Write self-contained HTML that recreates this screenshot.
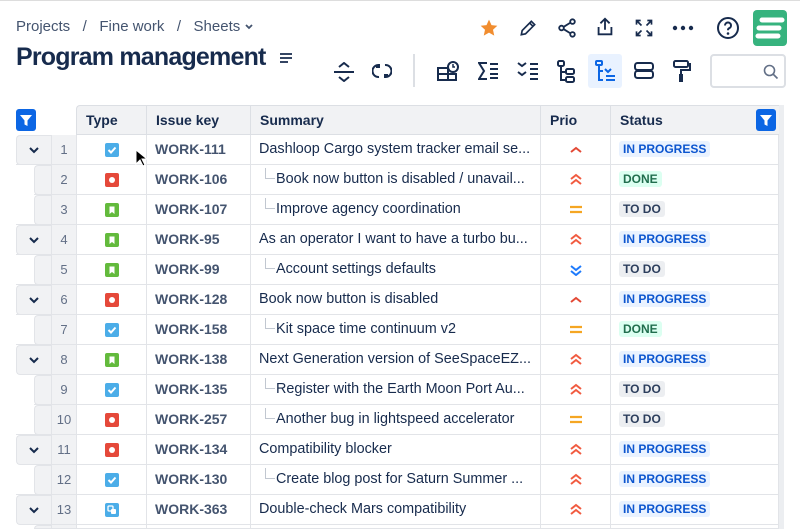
<!DOCTYPE html><html style="overflow:hidden;height:529px"><head><meta charset="utf-8"><style>
*{box-sizing:border-box;margin:0;padding:0}
body{width:800px;height:529px;overflow:hidden;background:#fff;font-family:"Liberation Sans",sans-serif;color:#172b4d;position:relative}
.a{position:absolute}
.bc{left:16px;top:18px;font-size:15px;color:#44546f}
h1{position:absolute;left:16px;top:43px;font-size:25px;font-weight:700;letter-spacing:-0.8px;color:#172b4d}
.ic{position:absolute}
.hdr{top:105px;height:30px;background:#f1f2f4;border-top:1px solid #dcdfe4;border-bottom:1px solid #dcdfe4;font-weight:700;font-size:14px}
.hc{position:absolute;top:0;height:28px;line-height:28px;padding-left:9px;border-left:1px solid #dcdfe4}
.row{position:absolute;left:0;width:783px;height:30px;font-size:14px}
.row::after{content:"";position:absolute;left:var(--l,34px);right:0;bottom:0;height:1px;background:#e2e4e8}
.par{--l:16px}
.g{position:absolute;top:0;height:30px;background:#f1f2f4;border-radius:4px 0 0 4px;border:1px solid #e2e4e8;border-right:none}
.n{position:absolute;left:51px;width:25px;top:0;height:30px;background:#f1f2f4;color:#626f86;text-align:center;line-height:29px;font-size:13px;border-left:1px solid #e2e4e8}
.c{position:absolute;top:0;height:30px;line-height:29px;border-left:1px solid #e2e4e8}
.ty{left:76px;width:70px}
.k{left:146px;width:104px;padding-left:8px;color:#44546f;font-weight:700}
.s{left:250px;width:290px;padding-left:8px;white-space:nowrap;overflow:hidden;font-size:14.4px}
.p{left:540px;width:70px}
.p svg{display:block}
.st{left:610px;width:169px;border-right:1px solid #e2e4e8}
.tk{display:inline-block;width:10px;height:11px;border-left:1px solid #c1c7d0;border-bottom:1px solid #c1c7d0;margin-left:6px;margin-right:1px;vertical-align:4px}
.lz{display:inline-block;font-size:12px;font-weight:700;line-height:16px;padding:0 4px;border-radius:3px;margin-left:8px;vertical-align:1px}
.ip{background:#e9f2ff;color:#0c55cf}.dn{background:#dcfff1;color:#216e4e}.td{background:#eceef1;color:#2c3e5d}
.t{position:absolute;left:28px;top:8px;width:14px;height:14px;border-radius:2px;line-height:0}
.t svg{display:block}
.chev{position:absolute;left:12px;top:10px;display:block}
</style></head><body>
<div style="position:absolute;left:0;top:0;width:800px;height:1px;background:#ddd"></div>
<div class="a bc">Projects &nbsp; / &nbsp; Fine work &nbsp; / &nbsp; Sheets <svg width="10" height="8" viewBox="0 0 10 8"><path d="M2 2l3 3 3-3" stroke="#44546f" stroke-width="1.8" fill="none"/></svg></div>
<h1>Program management</h1>
<svg class="ic" style="left:279px;top:52px" width="14" height="12"><path d="M1 2h12M1 6h12M1 10h8" stroke="#172b4d" stroke-width="1.8"/></svg>
<svg class="ic" style="left:479px;top:18px" width="20" height="20" viewBox="0 0 24 24"><path d="M12 2l3 6.5 7 .8-5.2 4.8 1.5 7-6.3-3.6-6.3 3.6 1.5-7L2 9.3l7-.8z" fill="#f18d2f"/></svg>
<svg class="ic" style="left:518px;top:18px" width="20" height="20" viewBox="0 0 24 24"><path d="M4 20l1-5L16 4l4 4L9 19z M14 6l4 4" stroke="#172b4d" stroke-width="2" fill="none"/></svg>
<svg class="ic" style="left:556px;top:17px" width="22" height="22" viewBox="0 0 24 24"><circle cx="18" cy="5" r="2.5" fill="none" stroke="#172b4d" stroke-width="2"/><circle cx="6" cy="12" r="2.5" fill="none" stroke="#172b4d" stroke-width="2"/><circle cx="18" cy="19" r="2.5" fill="none" stroke="#172b4d" stroke-width="2"/><path d="M8 11l8-5M8 13l8 5" stroke="#172b4d" stroke-width="2"/></svg>
<svg class="ic" style="left:594px;top:16px" width="22" height="22" viewBox="0 0 24 24"><path d="M12 15V3M7 8l5-5 5 5M5 12v8h14v-8" stroke="#172b4d" stroke-width="2" fill="none"/></svg>
<svg class="ic" style="left:634px;top:18px" width="20" height="20" viewBox="0 0 24 24"><path d="M3 8V3h5M21 8V3h-5M3 16v5h5M21 16v5h-5M3 3l6 6M21 3l-6 6M3 21l6-6M21 21l-6-6" stroke="#172b4d" stroke-width="2" fill="none"/></svg>
<svg class="ic" style="left:672px;top:25px" width="22" height="6"><circle cx="3" cy="3" r="2.2" fill="#172b4d"/><circle cx="11" cy="3" r="2.2" fill="#172b4d"/><circle cx="19" cy="3" r="2.2" fill="#172b4d"/></svg>
<svg class="ic" style="left:716px;top:16px" width="24" height="24" viewBox="0 0 24 24"><circle cx="12" cy="12" r="10" stroke="#172b4d" stroke-width="2" fill="none"/><path d="M9 9.5a3 3 0 1 1 4 2.8c-.8.4-1 1-1 2" stroke="#172b4d" stroke-width="2" fill="none"/><circle cx="12" cy="17.5" r="1.3" fill="#172b4d"/></svg>
<div class="a" style="left:753px;top:10px;width:34px;height:36px;background:#36b37e;border-radius:4px"><svg width="34" height="36"><path d="M9 10h20M6 18h20M5 26h20" stroke="#fff" stroke-width="5" stroke-linecap="round"/></svg></div>
<svg class="ic" style="left:333px;top:62px" width="22" height="20"><path d="M1 10h20M6 5l5-4 5 4M6 15l5 4 5-4" stroke="#172b4d" stroke-width="2" fill="none"/></svg>
<svg class="ic" style="left:372px;top:61px" width="20" height="20" viewBox="0 0 20 20"><path d="M7 16A6 6 0 0 1 6 4M13 4a6 6 0 0 1 1 12M4 6h3V3M16 14h-3v3" stroke="#172b4d" stroke-width="2" fill="none"/></svg>
<div class="a" style="left:413px;top:54px;width:2px;height:33px;background:#dcdfe4"></div>
<svg class="ic" style="left:436px;top:60px" width="24" height="22"><path d="M2 8h10v12H2zM2 14h18v6H12" stroke="#172b4d" stroke-width="2" fill="none"/><circle cx="17" cy="7" r="5" stroke="#172b4d" stroke-width="2" fill="#fff"/><path d="M17 4v3h2" stroke="#172b4d" stroke-width="1.5" fill="none"/></svg>
<svg class="ic" style="left:478px;top:62px" width="24" height="18"><path d="M9 1H1l5 8-5 8h8" stroke="#172b4d" stroke-width="2" fill="none"/><path d="M12 2h8M12 7h8M12 12h8M12 16h8" stroke="#172b4d" stroke-width="2"/></svg>
<svg class="ic" style="left:517px;top:61px" width="24" height="20"><path d="M1 2l4 3 4-3M1 11l4 3 4-3" stroke="#172b4d" stroke-width="2" fill="none"/><path d="M13 3h8M13 8h8M13 13h8M13 18h8" stroke="#172b4d" stroke-width="2"/></svg>
<svg class="ic" style="left:556px;top:60px" width="20" height="24"><rect x="2" y="1" width="6" height="5" rx="1.5" stroke="#172b4d" stroke-width="2" fill="none"/><path d="M5 6v14h4M5 12h4" stroke="#172b4d" stroke-width="2" fill="none"/><rect x="10" y="9" width="8" height="5" rx="1.5" stroke="#172b4d" stroke-width="2" fill="none"/><rect x="10" y="17" width="8" height="5" rx="1.5" stroke="#172b4d" stroke-width="2" fill="none"/></svg>
<div class="a" style="left:588px;top:54px;width:34px;height:34px;background:#e9f2ff;border-radius:3px"></div>
<svg class="ic" style="left:595px;top:60px" width="22" height="24"><rect x="1" y="1" width="6" height="4" rx="1" stroke="#0c66e4" stroke-width="2" fill="none"/><path d="M4 5v15h4M4 11h4" stroke="#0c66e4" stroke-width="2" fill="none"/><path d="M10 9l3 3 3-3M11 16h9M11 20h9" stroke="#0c66e4" stroke-width="2" fill="none"/></svg>
<svg class="ic" style="left:633px;top:61px" width="22" height="20"><rect x="2" y="2" width="18" height="7" rx="2.5" stroke="#172b4d" stroke-width="2" fill="none"/><rect x="2" y="10" width="18" height="7" rx="2.5" stroke="#172b4d" stroke-width="2" fill="none"/></svg>
<svg class="ic" style="left:672px;top:60px" width="20" height="24"><rect x="2" y="1" width="14" height="6" rx="1.5" stroke="#172b4d" stroke-width="2" fill="none"/><path d="M16 4h2v6h-9v4" stroke="#172b4d" stroke-width="2" fill="none"/><rect x="7" y="14" width="4" height="8" fill="#172b4d"/></svg>
<div class="a" style="left:710px;top:54px;width:76px;height:34px;border:2px solid #dcdfe4;border-radius:4px"><svg style="position:absolute;left:51px;top:8px" width="16" height="16"><circle cx="6.5" cy="6.5" r="5" stroke="#626f86" stroke-width="1.6" fill="none"/><path d="M10 10l4.5 4.5" stroke="#626f86" stroke-width="1.6"/></svg></div>
<div class="a" style="left:16px;top:109px;width:20px;height:22px;background:#0c66e4;border-radius:3px"><svg width="20" height="22"><path d="M4 6h12l-4.5 5.5V17l-3-1.5v-4z" fill="#fff"/></svg></div>
<div class="a hdr" style="left:76px;width:707px;border-left:1px solid #dcdfe4;border-radius:4px 0 0 0">
<div class="hc" style="left:0;border-left:none">Type</div>
<div class="hc" style="left:69px">Issue key</div>
<div class="hc" style="left:173px">Summary</div>
<div class="hc" style="left:463px">Prio</div>
<div class="hc" style="left:533px;width:170px;border-right:1px solid #dcdfe4">Status</div>
<div class="a" style="left:679px;top:3px;width:20px;height:22px;background:#0c66e4;border-radius:3px"><svg width="20" height="22"><path d="M4 6h12l-4.5 5.5V17l-3-1.5v-4z" fill="#fff"/></svg></div>
</div>

<svg width="0" height="0" style="position:absolute"><defs>
<g id="hi"><path d="M2 8l5-4 5 4" stroke="#e34935" stroke-width="2" fill="none"/></g>
<g id="hh"><path d="M2 6l5-4 5 4M2 11l5-4 5 4" stroke="#f15b40" stroke-width="2" fill="none"/></g>
<g id="md"><path d="M1 4h12M1 9h12" stroke="#f5a623" stroke-width="2.2"/></g>
<g id="lo"><path d="M2 3l5 4 5-4M2 8l5 4 5-4" stroke="#1d7afc" stroke-width="2" fill="none"/></g>
</defs></svg>

<div class="row par" style="top:135px"><div class="g" style="left:16px;width:36px"><svg class="chev" width="10" height="8"><path d="M1 2l4 4 4-4" stroke="#172b4d" stroke-width="2" fill="none"/></svg></div><div class="n">1</div><div class="c ty"><div class="t" style="background:#4bade8"><svg width="14" height="14"><path d="M3.5 7l2.5 2.5 4.5-5" stroke="#fff" stroke-width="2" fill="none"/></svg></div></div><div class="c k">WORK-111</div><div class="c s">Dashloop Cargo system tracker email se...</div><div class="c p"><svg style="margin:9px 0 0 28px" width="14" height="13"><use href="#hi"/></svg></div><div class="c st"><span class="lz ip">IN PROGRESS</span></div></div>
<svg class="ic" style="left:135px;top:149px;z-index:2" width="12" height="18"><path d="M1 1v14l4-4 3 6 2-1-3-6h5z" fill="#000" stroke="#fff" stroke-width="1"/></svg>

<div class="row" style="top:165px"><div class="g" style="left:34px;width:18px"></div><div class="n">2</div><div class="c ty"><div class="t" style="background:#e5493a"><svg width="14" height="14"><circle cx="7" cy="7" r="3" fill="#fff"/></svg></div></div><div class="c k">WORK-106</div><div class="c s"><span class="tk"></span>Book now button is disabled / unavail...</div><div class="c p"><svg style="margin:8px 0 0 28px" width="14" height="13"><use href="#hh"/></svg></div><div class="c st"><span class="lz dn">DONE</span></div></div>

<div class="row par" style="top:195px"><div class="g" style="left:34px;width:18px"></div><div class="n">3</div><div class="c ty"><div class="t" style="background:#63ba3c"><svg width="14" height="14"><path d="M4.5 3.5h5v7.5L7 9l-2.5 2z" fill="#fff"/></svg></div></div><div class="c k">WORK-107</div><div class="c s"><span class="tk"></span>Improve agency coordination</div><div class="c p"><svg style="margin:8px 0 0 28px" width="14" height="13"><use href="#md"/></svg></div><div class="c st"><span class="lz td">TO DO</span></div></div>

<div class="row par" style="top:225px"><div class="g" style="left:16px;width:36px"><svg class="chev" width="10" height="8"><path d="M1 2l4 4 4-4" stroke="#172b4d" stroke-width="2" fill="none"/></svg></div><div class="n">4</div><div class="c ty"><div class="t" style="background:#63ba3c"><svg width="14" height="14"><path d="M4.5 3.5h5v7.5L7 9l-2.5 2z" fill="#fff"/></svg></div></div><div class="c k">WORK-95</div><div class="c s">As an operator I want to have a turbo bu...</div><div class="c p"><svg style="margin:8px 0 0 28px" width="14" height="13"><use href="#hh"/></svg></div><div class="c st"><span class="lz ip">IN PROGRESS</span></div></div>

<div class="row par" style="top:255px"><div class="g" style="left:34px;width:18px"></div><div class="n">5</div><div class="c ty"><div class="t" style="background:#63ba3c"><svg width="14" height="14"><path d="M4.5 3.5h5v7.5L7 9l-2.5 2z" fill="#fff"/></svg></div></div><div class="c k">WORK-99</div><div class="c s"><span class="tk"></span>Account settings defaults</div><div class="c p"><svg style="margin:8px 0 0 28px" width="14" height="13"><use href="#lo"/></svg></div><div class="c st"><span class="lz td">TO DO</span></div></div>

<div class="row par" style="top:285px"><div class="g" style="left:16px;width:36px"><svg class="chev" width="10" height="8"><path d="M1 2l4 4 4-4" stroke="#172b4d" stroke-width="2" fill="none"/></svg></div><div class="n">6</div><div class="c ty"><div class="t" style="background:#e5493a"><svg width="14" height="14"><circle cx="7" cy="7" r="3" fill="#fff"/></svg></div></div><div class="c k">WORK-128</div><div class="c s">Book now button is disabled</div><div class="c p"><svg style="margin:9px 0 0 28px" width="14" height="13"><use href="#hi"/></svg></div><div class="c st"><span class="lz ip">IN PROGRESS</span></div></div>

<div class="row par" style="top:315px"><div class="g" style="left:34px;width:18px"></div><div class="n">7</div><div class="c ty"><div class="t" style="background:#4bade8"><svg width="14" height="14"><path d="M3.5 7l2.5 2.5 4.5-5" stroke="#fff" stroke-width="2" fill="none"/></svg></div></div><div class="c k">WORK-158</div><div class="c s"><span class="tk"></span>Kit space time continuum v2</div><div class="c p"><svg style="margin:8px 0 0 28px" width="14" height="13"><use href="#md"/></svg></div><div class="c st"><span class="lz dn">DONE</span></div></div>

<div class="row" style="top:345px"><div class="g" style="left:16px;width:36px"><svg class="chev" width="10" height="8"><path d="M1 2l4 4 4-4" stroke="#172b4d" stroke-width="2" fill="none"/></svg></div><div class="n">8</div><div class="c ty"><div class="t" style="background:#63ba3c"><svg width="14" height="14"><path d="M4.5 3.5h5v7.5L7 9l-2.5 2z" fill="#fff"/></svg></div></div><div class="c k">WORK-138</div><div class="c s">Next Generation version of SeeSpaceEZ...</div><div class="c p"><svg style="margin:8px 0 0 28px" width="14" height="13"><use href="#hh"/></svg></div><div class="c st"><span class="lz ip">IN PROGRESS</span></div></div>

<div class="row" style="top:375px"><div class="g" style="left:34px;width:18px"></div><div class="n">9</div><div class="c ty"><div class="t" style="background:#4bade8"><svg width="14" height="14"><path d="M3.5 7l2.5 2.5 4.5-5" stroke="#fff" stroke-width="2" fill="none"/></svg></div></div><div class="c k">WORK-135</div><div class="c s"><span class="tk"></span>Register with the Earth Moon Port Au...</div><div class="c p"><svg style="margin:8px 0 0 28px" width="14" height="13"><use href="#hh"/></svg></div><div class="c st"><span class="lz td">TO DO</span></div></div>

<div class="row par" style="top:405px"><div class="g" style="left:34px;width:18px"></div><div class="n">10</div><div class="c ty"><div class="t" style="background:#e5493a"><svg width="14" height="14"><circle cx="7" cy="7" r="3" fill="#fff"/></svg></div></div><div class="c k">WORK-257</div><div class="c s"><span class="tk"></span>Another bug in lightspeed accelerator</div><div class="c p"><svg style="margin:8px 0 0 28px" width="14" height="13"><use href="#md"/></svg></div><div class="c st"><span class="lz td">TO DO</span></div></div>

<div class="row" style="top:435px"><div class="g" style="left:16px;width:36px"><svg class="chev" width="10" height="8"><path d="M1 2l4 4 4-4" stroke="#172b4d" stroke-width="2" fill="none"/></svg></div><div class="n">11</div><div class="c ty"><div class="t" style="background:#e5493a"><svg width="14" height="14"><circle cx="7" cy="7" r="3" fill="#fff"/></svg></div></div><div class="c k">WORK-134</div><div class="c s">Compatibility blocker</div><div class="c p"><svg style="margin:8px 0 0 28px" width="14" height="13"><use href="#hh"/></svg></div><div class="c st"><span class="lz ip">IN PROGRESS</span></div></div>

<div class="row par" style="top:465px"><div class="g" style="left:34px;width:18px"></div><div class="n">12</div><div class="c ty"><div class="t" style="background:#4bade8"><svg width="14" height="14"><path d="M3.5 7l2.5 2.5 4.5-5" stroke="#fff" stroke-width="2" fill="none"/></svg></div></div><div class="c k">WORK-130</div><div class="c s"><span class="tk"></span>Create blog post for Saturn Summer ...</div><div class="c p"><svg style="margin:8px 0 0 28px" width="14" height="13"><use href="#hh"/></svg></div><div class="c st"><span class="lz ip">IN PROGRESS</span></div></div>

<div class="row" style="top:495px"><div class="g" style="left:16px;width:36px"><svg class="chev" width="10" height="8"><path d="M1 2l4 4 4-4" stroke="#172b4d" stroke-width="2" fill="none"/></svg></div><div class="n">13</div><div class="c ty"><div class="t" style="background:#4bade8"><svg width="14" height="14"><rect x="3" y="3" width="5" height="5" rx="1" stroke="#fff" stroke-width="1.3" fill="none"/><rect x="6" y="6" width="5" height="5" rx="1" fill="#fff"/></svg></div></div><div class="c k">WORK-363</div><div class="c s">Double-check Mars compatibility</div><div class="c p"><svg style="margin:8px 0 0 28px" width="14" height="13"><use href="#hh"/></svg></div><div class="c st"><span class="lz ip">IN PROGRESS</span></div></div>

<div class="row" style="top:525px;height:4px;overflow:hidden"><div class="g" style="left:34px;width:18px"></div><div class="n"></div><div class="c ty"></div><div class="c k"></div><div class="c s"></div><div class="c p"></div><div class="c st"></div></div>
<div class="a" style="left:779px;top:105px;width:5px;height:424px;background:#eceef1"></div>
</body></html>
